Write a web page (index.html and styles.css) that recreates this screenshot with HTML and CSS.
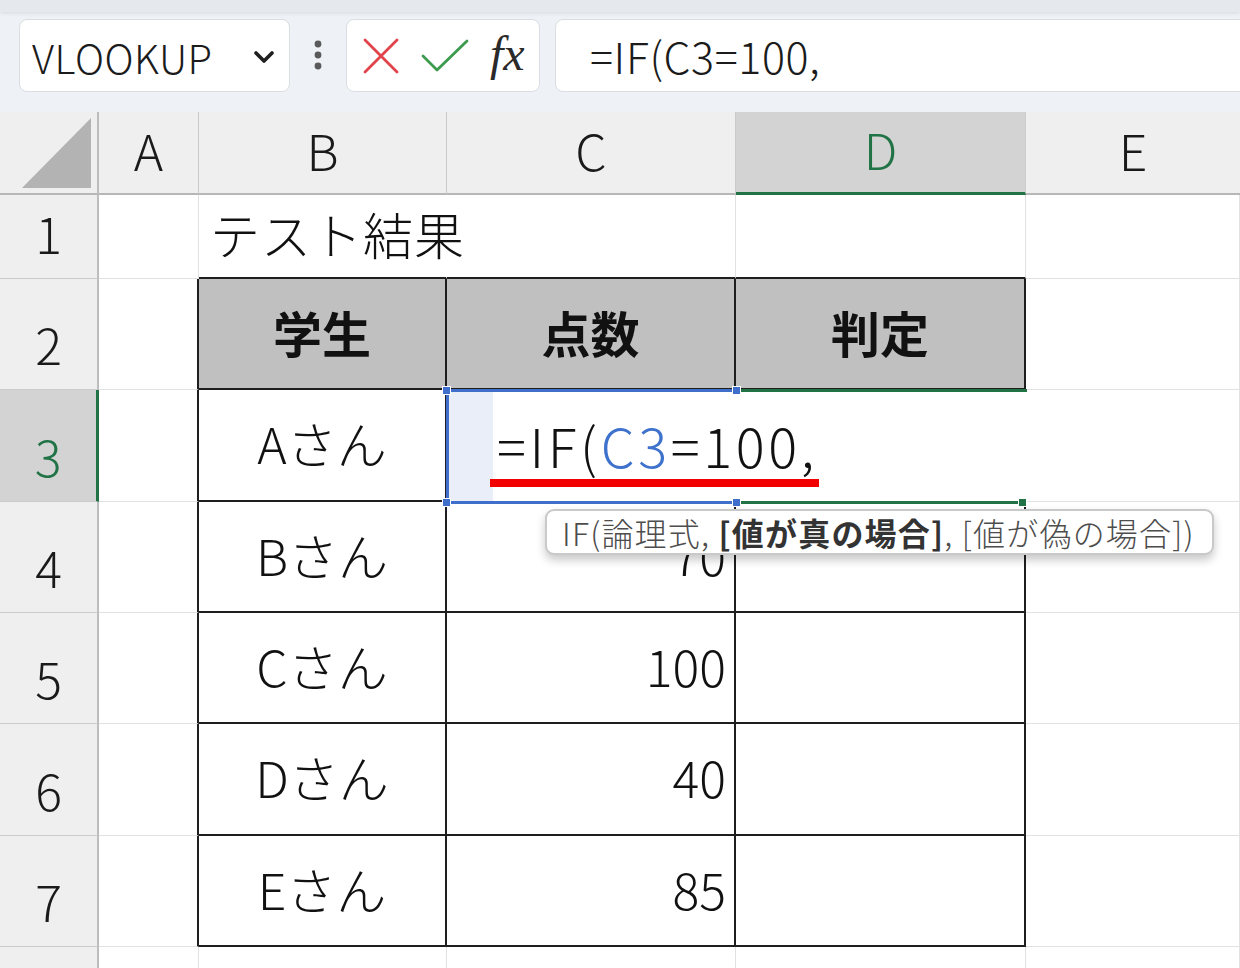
FILE: index.html
```html
<!DOCTYPE html>
<html lang="ja">
<head>
<meta charset="utf-8">
<title>Excel</title>
<link rel="stylesheet" href="styles.css">
</head>
<body>
<div class="topbar">
  <div class="ribbon-edge"></div>
  <div class="fbar">
    <div class="namebox">
      <span class="name">VLOOKUP</span>
      <svg class="chev" width="22" height="14" viewBox="0 0 22 14"><path d="M3 3 L11 11 L19 3" fill="none" stroke="#1f1f1f" stroke-width="3.6" stroke-linecap="round" stroke-linejoin="round"/></svg>
    </div>
    <div class="grip">
      <svg width="10" height="32" viewBox="0 0 10 32"><circle cx="5" cy="4" r="3.4" fill="#5a5a5a"/><circle cx="5" cy="15" r="3.4" fill="#5a5a5a"/><circle cx="5" cy="26" r="3.4" fill="#5a5a5a"/></svg>
    </div>
    <div class="actions">
      <svg class="ico-x" width="36" height="36" viewBox="0 0 36 36"><path d="M2 2 L34 34 M34 2 L2 34" fill="none" stroke="#e0434a" stroke-width="2.8" stroke-linecap="round"/></svg>
      <svg class="ico-ok" width="48" height="36" viewBox="0 0 48 36"><path d="M2 18 L16 32 L46 3" fill="none" stroke="#3d9b4f" stroke-width="2.8" stroke-linecap="round" stroke-linejoin="round"/></svg>
      <span class="fx">fx</span>
    </div>
    <div class="formula">=IF(C3=100,</div>
  </div>
</div>

<div class="sheet">
  <!-- column headers -->
  <div class="corner"><svg viewBox="0 0 97 81" width="97" height="81"><polygon points="22,76 91,76 91,6" fill="#b3b3b3"/></svg></div>
  <div class="ch">A</div>
  <div class="ch">B</div>
  <div class="ch">C</div>
  <div class="ch sel">D</div>
  <div class="ch last">E</div>

  <!-- row 1 -->
  <div class="rh">1</div>
  <div class="c"></div>
  <div class="c tb nor title">テスト結果</div>
  <div class="c tb"></div>
  <div class="c tb"></div>
  <div class="c"></div>

  <!-- row 2 -->
  <div class="rh">2</div>
  <div class="c tl"></div>
  <div class="c t th">学生</div>
  <div class="c t th">点数</div>
  <div class="c t th">判定</div>
  <div class="c"></div>

  <!-- row 3 -->
  <div class="rh sel">3</div>
  <div class="c tl"></div>
  <div class="c t ctr">Aさん</div>
  <div class="c t num covered">100</div>
  <div class="c t"></div>
  <div class="c"></div>

  <!-- row 4 -->
  <div class="rh">4</div>
  <div class="c tl"></div>
  <div class="c t ctr">Bさん</div>
  <div class="c t num">70</div>
  <div class="c t"></div>
  <div class="c"></div>

  <!-- row 5 -->
  <div class="rh">5</div>
  <div class="c tl"></div>
  <div class="c t ctr">Cさん</div>
  <div class="c t num">100</div>
  <div class="c t"></div>
  <div class="c"></div>

  <!-- row 6 -->
  <div class="rh">6</div>
  <div class="c tl"></div>
  <div class="c t ctr">Dさん</div>
  <div class="c t num">40</div>
  <div class="c t"></div>
  <div class="c"></div>

  <!-- row 7 -->
  <div class="rh">7</div>
  <div class="c tl"></div>
  <div class="c t ctr">Eさん</div>
  <div class="c t num">85</div>
  <div class="c t"></div>
  <div class="c"></div>

  <!-- row 8 (only its top edge is in view) -->
  <div class="rh"></div>
  <div class="c"></div>
  <div class="c"></div>
  <div class="c"></div>
  <div class="c"></div>
  <div class="c"></div>

  <!-- overlays: selection, in-cell editor, tooltip -->
  <div class="active-box"></div>
  <div class="ref-box"></div>
  <div class="editor"><span>=IF(</span><span class="ref">C3</span><span>=100,</span></div>
  <div class="underline"></div>
  <div class="handle blue h1"></div>
  <div class="handle blue h2"></div>
  <div class="handle blue h3"></div>
  <div class="handle blue h4"></div>
  <div class="handle green h5"></div>
  <div class="tooltip">IF(論理式,&nbsp;<b>[値が真の場合]</b>,&nbsp;[値が偽の場合])</div>
</div>
</body>
</html>
```

FILE: styles.css
```css
* { box-sizing: border-box; }
html, body { margin: 0; padding: 0; }
body {
  width: 1240px;
  height: 968px;
  overflow: hidden;
  background: #ffffff;
  font-family: "Noto Sans CJK JP", "Noto Sans", sans-serif;
  font-weight: 300;
  color: #111111;
}

/* ---------- formula bar ---------- */
.topbar {
  height: 112px;
  background: #eef1f5;
  overflow: hidden;
}
.ribbon-edge {
  height: 12px;
  background: #e5e8ec;
  box-shadow: 0 1px 4px rgba(0, 0, 0, 0.10);
}
.fbar {
  display: flex;
  align-items: flex-start;
  padding: 7px 0 0 19px;
}
.namebox {
  width: 271px;
  height: 73px;
  background: #ffffff;
  border: 1px solid #dadde2;
  border-radius: 8px;
  display: flex;
  align-items: center;
  justify-content: space-between;
  padding: 0 14px 0 12px;
}
.name {
  font-size: 40px;
  letter-spacing: 0.5px;
  line-height: 1;
  color: #1b1b1b;
  padding-top: 2px;
}
.chev { margin-top: 2px; }
.grip {
  width: 56px;
  height: 73px;
  display: flex;
  align-items: center;
  justify-content: center;
}
.actions {
  width: 194px;
  height: 73px;
  background: #ffffff;
  border: 1px solid #dadde2;
  border-radius: 8px;
  display: flex;
  align-items: center;
  padding-left: 16px;
}
.ico-x { margin-right: 22px; }
.ico-ok { margin-right: 21px; }
.fx {
  font-family: "Liberation Serif", "DejaVu Serif", serif;
  font-style: italic;
  font-weight: 400;
  font-size: 48px;
  line-height: 1;
  color: #2a2a2a;
  margin-top: -4px;
}
.formula {
  flex: 1;
  margin-left: 15px;
  margin-right: -20px;
  height: 73px;
  background: #ffffff;
  border: 1px solid #dadde2;
  border-radius: 8px;
  display: flex;
  align-items: center;
  padding-left: 34px;
  font-size: 43px;
  letter-spacing: 0.6px;
  line-height: 1;
  color: #1b1b1b;
}

/* ---------- sheet grid ---------- */
.sheet {
  position: relative;
  display: grid;
  grid-template-columns: 99px 100px 248px 289px 290px 1fr;
  grid-template-rows: 83px 84px 111px 112px 111px 111px 112px 111px 1fr;
  height: 856px;
  overflow: hidden;
  font-size: 50px;
  line-height: 1;
}
.corner {
  background: #efefef;
  border-right: 2px solid #bdbdbd;
  border-bottom: 2px solid #b7b7b7;
}
.corner svg { display: block; }
.ch {
  background: #efefef;
  border-right: 1px solid #cbcbcb;
  border-bottom: 2px solid #b7b7b7;
  display: flex;
  align-items: center;
  justify-content: center;
  padding-bottom: 8px;
  color: #1a1a1a;
}
.ch.last { border-right: none; }
.ch.sel {
  background: #d3d3d3;
  color: #217346;
  border-bottom: 3px solid #217346;
}
.rh {
  background: #efefef;
  border-right: 2px solid #bdbdbd;
  border-bottom: 1px solid #cbcbcb;
  display: flex;
  align-items: flex-end;
  justify-content: center;
  padding-bottom: 21px;
  color: #1a1a1a;
}
.rh.sel {
  background: #d3d3d3;
  color: #217346;
  border-right: 3px solid #217346;
}
.c {
  border-right: 1px solid #e1e1e1;
  border-bottom: 1px solid #e1e1e1;
  display: flex;
  align-items: center;
  white-space: nowrap;
  padding-bottom: 6px;
}
.c.nor { border-right-color: transparent; }
.c.covered { visibility: hidden; }
.title { padding-left: 11px; letter-spacing: 1px; }
.tb { border-bottom: 2px solid #1e1e1e; }
.tl { border-right: 2px solid #1e1e1e; }
.t {
  border-right: 2px solid #1e1e1e;
  border-bottom: 2px solid #1e1e1e;
}
.c.t.covered {
  visibility: visible;
  color: transparent;
}
.th {
  background: #c0c0c0;
  font-weight: 700;
  font-size: 49px;
  justify-content: center;
  padding-bottom: 4px;
}
.ctr { justify-content: center; }
.num { justify-content: flex-end; padding-right: 8px; }

/* ---------- overlays ---------- */
.active-box {
  position: absolute;
  left: 736px;
  top: 277px;
  width: 291px;
  height: 115px;
  border-top: 3px solid #217346;
  border-bottom: 3px solid #217346;
}
.ref-box {
  position: absolute;
  left: 446px;
  top: 277px;
  width: 292px;
  height: 115px;
  border: 3px solid #3f6fcb;
  background: #e9eef8;
}
.editor {
  position: absolute;
  left: 493px;
  top: 280px;
  width: 534px;
  height: 109px;
  background: #ffffff;
  display: flex;
  align-items: center;
  padding-left: 4px;
  padding-bottom: 4px;
  font-size: 54px;
  letter-spacing: 3.6px;
  color: #111111;
}
.editor .ref { color: #3f72cc; }
.underline {
  position: absolute;
  left: 490px;
  top: 367px;
  width: 329px;
  height: 8px;
  background: #f20000;
}
.handle {
  position: absolute;
  width: 9px;
  height: 9px;
  border: 1px solid #ffffff;
}
.handle.blue { background: #3f6fcb; }
.handle.green { background: #217346; }
.h1 { left: 442px; top: 274px; }
.h2 { left: 732px; top: 274px; }
.h3 { left: 442px; top: 386px; }
.h4 { left: 732px; top: 386px; }
.h5 { left: 1018px; top: 386px; }
.tooltip {
  position: absolute;
  left: 545px;
  top: 397px;
  width: 669px;
  height: 46px;
  background: #ffffff;
  border: 2px solid #c9c9c9;
  border-radius: 9px;
  box-shadow: 0 5px 10px rgba(0, 0, 0, 0.22);
  display: flex;
  align-items: center;
  padding-left: 15px;
  font-size: 32px;
  letter-spacing: 1.2px;
  line-height: 1;
  color: #4d4d4d;
  white-space: nowrap;
}
.tooltip b { color: #333333; font-weight: 700; }
```
